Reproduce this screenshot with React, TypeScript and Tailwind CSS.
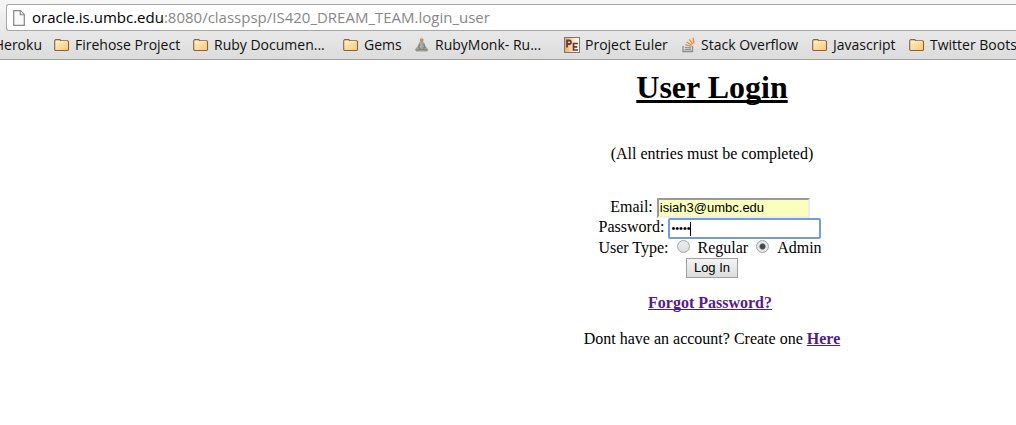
import { useState } from "react";
import type { ReactNode } from "react";

function FolderIcon() {
  return (
    <svg width="16" height="14" viewBox="0 0 16 14" className="shrink-0">
      <defs>
        <linearGradient id="folder" x1="0" y1="0" x2="1" y2="1">
          <stop offset="0" stopColor="#fff0c4" />
          <stop offset="1" stopColor="#fbc878" />
        </linearGradient>
      </defs>
      <path
        d="M.7 11.8V2.7L1.7 1.6H5.8L6.8 2.7H13.7L14.5 3.5V11.8L13.7 12.5H1.5Z"
        fill="url(#folder)"
        stroke="#8a6240"
        strokeWidth="1.1"
      />
      <path d="M2 4.4H5.8L6.8 3.7H13.3" fill="none" stroke="#fff8e0" strokeWidth=".8" />
    </svg>
  );
}

function MonkIcon() {
  return (
    <svg width="16" height="16" viewBox="0 0 16 16" className="shrink-0">
      <path d="M5.2 5.2H10L11.4 9L13.4 11.4L14.6 12.6L13 14.4H2.4L.8 12.8L2.2 11L4 9Z" fill="#9ba09a" />
      <path d="M5.5 7L4.6 10.5L7.5 12L10.8 10.5L10 7M2.5 13.2L7.5 12L13 13.2" fill="none" stroke="#757b76" strokeWidth=".9" />
      <path d="M7 6L8 10M6 9L7 11" fill="none" stroke="#bcc0b9" strokeWidth=".8" />
      <ellipse cx="7.7" cy="3" rx="1.8" ry="2.5" fill="#b98e6c" />
      <path d="M6.2 2A1.7 1.7 0 0 1 9.2 2Z" fill="#e5cfb8" />
      <path d="M6.5 11.5H9" stroke="#c39a7a" />
    </svg>
  );
}

function EulerIcon() {
  return (
    <svg width="16" height="16" viewBox="0 0 16 16" className="shrink-0">
      <defs>
        <linearGradient id="euler" x1="0" y1="0" x2="1" y2="0">
          <stop offset="0" stopColor="#f0a868" />
          <stop offset=".6" stopColor="#fbe3cc" />
          <stop offset="1" stopColor="#fff" />
        </linearGradient>
      </defs>
      <rect x=".5" y=".5" width="15" height="15" fill="url(#euler)" stroke="#777" />
      <path d="M3 10.5V3.5H5.7Q7 3.5 7 5.2T5.7 7H3" fill="none" stroke="#5d4037" strokeWidth="1.8" />
      <path d="M14 6.5H9.5V13H14M9.5 9.8H13.3" fill="none" stroke="#5d4037" strokeWidth="1.7" />
    </svg>
  );
}

function StackIcon() {
  return (
    <svg width="14" height="16" viewBox="0 0 14 16" className="shrink-0" fill="none">
      <path d="M1 9V14.5H10.5V9" stroke="#8b8b8b" strokeWidth="1.3" />
      <path d="M2.7 12.5H9" stroke="#8b8b8b" strokeWidth="1.2" />
      <path d="M2.8 10.3L9 10.9" stroke="#a59173" strokeWidth="1.2" />
      <path d="M3.3 7.6L9.3 9.4" stroke="#c2985e" strokeWidth="1.2" />
      <path d="M4.6 5L9.9 8.2" stroke="#d9933e" strokeWidth="1.3" />
      <path d="M7.2 2.4L10.8 7.2" stroke="#ec8d2c" strokeWidth="1.3" />
      <path d="M11 .8L12 6.4" stroke="#f48024" strokeWidth="1.3" />
    </svg>
  );
}

function PageIcon() {
  return (
    <svg width="12" height="16" viewBox="0 0 12 16" className="shrink-0">
      <path d="M.7.7H7.5L11.3 4.5V15.3H.7Z" fill="#fafafa" stroke="#888" strokeWidth="1.2" />
      <path d="M7.2.9V4.8H11.2" fill="#e8e8e8" stroke="#888" strokeWidth="1.1" />
    </svg>
  );
}

const bookmarks: { label: string; icon: ReactNode; size: string }[] = [
  { label: "Firehose Project", icon: <FolderIcon />, size: "w-[139px]" },
  { label: "Ruby Documen...", icon: <FolderIcon />, size: "w-[150px]" },
  { label: "Gems", icon: <FolderIcon />, size: "w-[71px]" },
  { label: "RubyMonk- Ru...", icon: <MonkIcon />, size: "w-[150px]" },
  { label: "Project Euler", icon: <EulerIcon />, size: "w-[118px]" },
  { label: "Stack Overflow", icon: <StackIcon />, size: "w-[130px]" },
  { label: "Javascript", icon: <FolderIcon />, size: "w-[97px]" },
  { label: "Twitter Boots", icon: <FolderIcon />, size: "w-[110px]" },
];

function BrowserBar() {
  return (
    <header className="overflow-hidden border-b border-[#a0a0a0] bg-linear-to-b from-[#f6f6f6] to-[#dcdcdc] pt-1 font-['Open_Sans','Noto_Sans',sans-serif] whitespace-nowrap">
      <div className="ml-1.5 flex h-[27px] items-center gap-[7px] rounded-l-[3px] border border-r-0 border-[#a8a8a8] bg-white pl-1.5 text-[15px]">
        <PageIcon />
        <p className="text-[#888]">
          <span className="text-black">oracle.is.umbc.edu</span>
          :8080/classpsp/IS420_DREAM_TEAM.login_user
        </p>
      </div>
      <nav aria-label="Bookmarks" className="flex h-7 items-center text-sm text-[#111]">
        <a href="#heroku" className="mr-3 flex w-[42px] shrink-0 justify-end">
          Heroku
        </a>
        {bookmarks.map((b) => (
          <a key={b.label} href="#bookmark" className={`flex shrink-0 items-center gap-[5px] ${b.size}`}>
            {b.icon}
            {b.label}
          </a>
        ))}
      </nav>
    </header>
  );
}

const radio =
  "mb-1 size-[13px] shrink-0 appearance-none rounded-full border border-[#a3a3a3] bg-linear-to-b from-[#ececec] to-[#dedede] checked:bg-[radial-gradient(circle,#4a4a4a_0,#4a4a4a_2.5px,#e6e6e6_3.5px)]";

export default function App() {
  const [email, setEmail] = useState("isiah3@umbc.edu");
  const [password, setPassword] = useState("abcde");
  const [kind, setKind] = useState("admin");

  return (
    <div className="bg-white text-black">
      <BrowserBar />
      <main className="flex flex-col items-center pl-102 font-['Liberation_Serif',serif] text-base leading-[18px]">
        <h1 className="mt-[9px] text-[32px] leading-9 font-bold underline [text-decoration-skip-ink:none]">
          User Login
        </h1>
        <p className="mt-10">(All entries must be completed)</p>
        <form className="mt-[35px] flex flex-col items-center" onSubmit={(e) => e.preventDefault()}>
          <div className="flex items-start gap-1 pr-1">
            <label htmlFor="email">Email:</label>
            <input
              id="email"
              type="email"
              value={email}
              onChange={(e) => setEmail(e.target.value)}
              className="h-5 w-[153px] border-2 border-t-[#999] border-r-[#eee] border-b-[#eee] border-l-[#999] bg-[#faffbd] px-px pb-0.5 font-['Liberation_Sans',sans-serif] text-[13px] outline-none"
            />
          </div>
          <div className="flex items-start gap-1 pr-1">
            <label htmlFor="password">Password:</label>
            <div className="relative flex">
              <input
                id="password"
                type="password"
                value={password}
                onChange={(e) => setPassword(e.target.value)}
                className="h-[21px] w-[153px] rounded-[2px] border-2 border-[#6f9ddf] bg-white px-px pb-0.5 font-['Liberation_Sans',sans-serif] text-[11px] outline-none"
              />
              <span className="absolute top-1 left-[22px] h-3.5 w-px bg-black" />
            </div>
          </div>
          <fieldset className="flex h-[19px] items-center pr-1">
            <legend className="float-left mr-2">User Type:</legend>
            <input
              id="regular"
              type="radio"
              name="kind"
              checked={kind === "regular"}
              onChange={() => setKind("regular")}
              className={radio}
            />
            <label htmlFor="regular" className="mx-2">
              Regular
            </label>
            <input
              id="admin"
              type="radio"
              name="kind"
              checked={kind === "admin"}
              onChange={() => setKind("admin")}
              className={radio}
            />
            <label htmlFor="admin" className="ml-2">
              Admin
            </label>
          </fieldset>
          <button
            type="submit"
            className="h-5 border border-[#a0a0a0] bg-linear-to-b from-[#f4f4f4] to-[#dcdcdc] px-[7px] font-['Liberation_Sans',sans-serif] text-[13px] leading-4"
          >
            Log In
          </button>
        </form>
        <p className="mt-4 pr-1">
          <a href="#forgot" className="font-bold text-[#551a8b] underline [text-decoration-skip-ink:none]">
            Forgot Password?
          </a>
        </p>
        <p className="mt-[18px]">
          Dont have an account? Create one{" "}
          <a href="#register" className="font-bold text-[#551a8b] underline [text-decoration-skip-ink:none]">
            Here
          </a>
        </p>
      </main>
    </div>
  );
}
